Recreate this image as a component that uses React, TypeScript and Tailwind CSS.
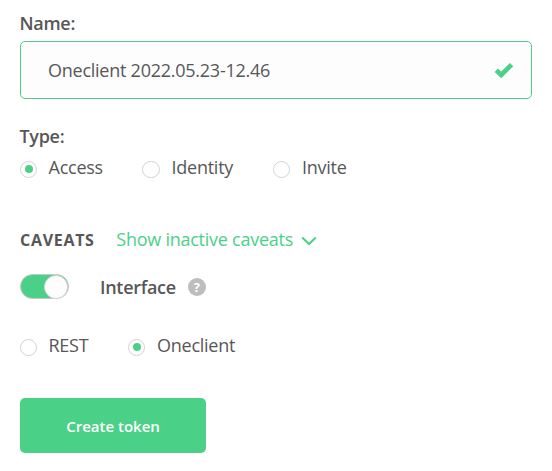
import React from 'react';

type RadioProps = { label: string; checked?: boolean; className?: string; circleClass?: string; textClass?: string };

function Radio({ label, checked = false, className = '', circleClass = 'w-[17px]', textClass = 'ml-3' }: RadioProps) {
  return (
    <div role="radio" aria-checked={checked} className={`flex h-6 items-center ${className}`}>
      <span className={`mt-1 flex h-[17px] shrink-0 items-center justify-center rounded-full border border-[#d2d2d2] bg-white ${circleClass}`}>
        {checked && <span className="size-2 rounded-full bg-[#4bd187]" />}
      </span>
      <span className={`whitespace-nowrap ${textClass}`}>{label}</span>
    </div>
  );
}

export default function App() {
  return (
    <main className="flex h-[471px] w-[552px] flex-col items-start bg-white pl-5 pt-[11px] font-['Open_Sans',sans-serif] text-[18px] leading-6 tracking-[-0.25px] text-[#575757]">
      <div className="-ml-[0.5px] h-[30px] font-semibold tracking-[-0.3px]">Name:</div>
      <div className="flex h-[58px] w-[512px] items-center justify-between rounded-[5px] border border-[#4bd187] bg-[#fdfdfd] pl-[27px] pr-[17px]">
        <span>Oneclient 2022.05.23-12.46</span>
        <svg className="mt-px" width="20" height="17" viewBox="0 0 20 17" fill="none" stroke="#4bd187" strokeWidth="4.8">
          <path d="M2.3 8.2 7.2 12.9 17.6 2.6" />
        </svg>
      </div>
      <div className="-ml-[0.5px] mt-[25px] font-semibold tracking-[-0.3px]">Type:</div>
      <div className="mt-[7px] flex">
        <Radio label="Access" checked className="w-[122px]" textClass="ml-[11.5px]" />
        <Radio label="Identity" className="w-[131px]" circleClass="w-[18px]" textClass="ml-[11.5px]" />
        <Radio label="Invite" />
      </div>
      <div className="mt-12 flex h-6 items-center">
        <span className="mt-px w-[96.3px] text-[16px] font-bold tracking-[0.7px]">CAVEATS</span>
        <span className="tracking-[-0.25px] text-[#4bd187]">Show inactive caveats</span>
        <svg className="ml-2 mt-[3px]" width="16" height="10" viewBox="0 0 16 10" fill="none" stroke="#4bd187" strokeWidth="2">
          <path d="M1.2 1.5 8 8 14.8 1.5" />
        </svg>
      </div>
      <div className="mt-[23px] flex h-[25px] items-center">
        <span role="switch" aria-checked="true" className="flex h-[25px] w-[49px] items-center justify-end rounded-full border border-[#c8c8c8] bg-[#4bd187]">
          <span className="size-[24px] shrink-0 rounded-full border border-[#d6d6d6] bg-[#fdfdfd]" />
        </span>
        <span className="ml-[31px] font-semibold tracking-[-0.3px]">Interface</span>
        <span className="ml-3 mt-px flex size-[18px] items-center justify-center rounded-full bg-[#bdbdbd] text-[13px] font-bold leading-none tracking-normal text-white">?</span>
      </div>
      <div className="mt-[34px] flex">
        <Radio label="REST" className="w-[108px]" textClass="ml-[11.5px]" />
        <Radio label="Oneclient" checked />
      </div>
      <button className="mt-[41px] h-[55px] w-[186px] rounded-[5px] bg-[#4bd187] text-[15px] font-semibold tracking-normal text-white">
        Create token
      </button>
    </main>
  );
}
